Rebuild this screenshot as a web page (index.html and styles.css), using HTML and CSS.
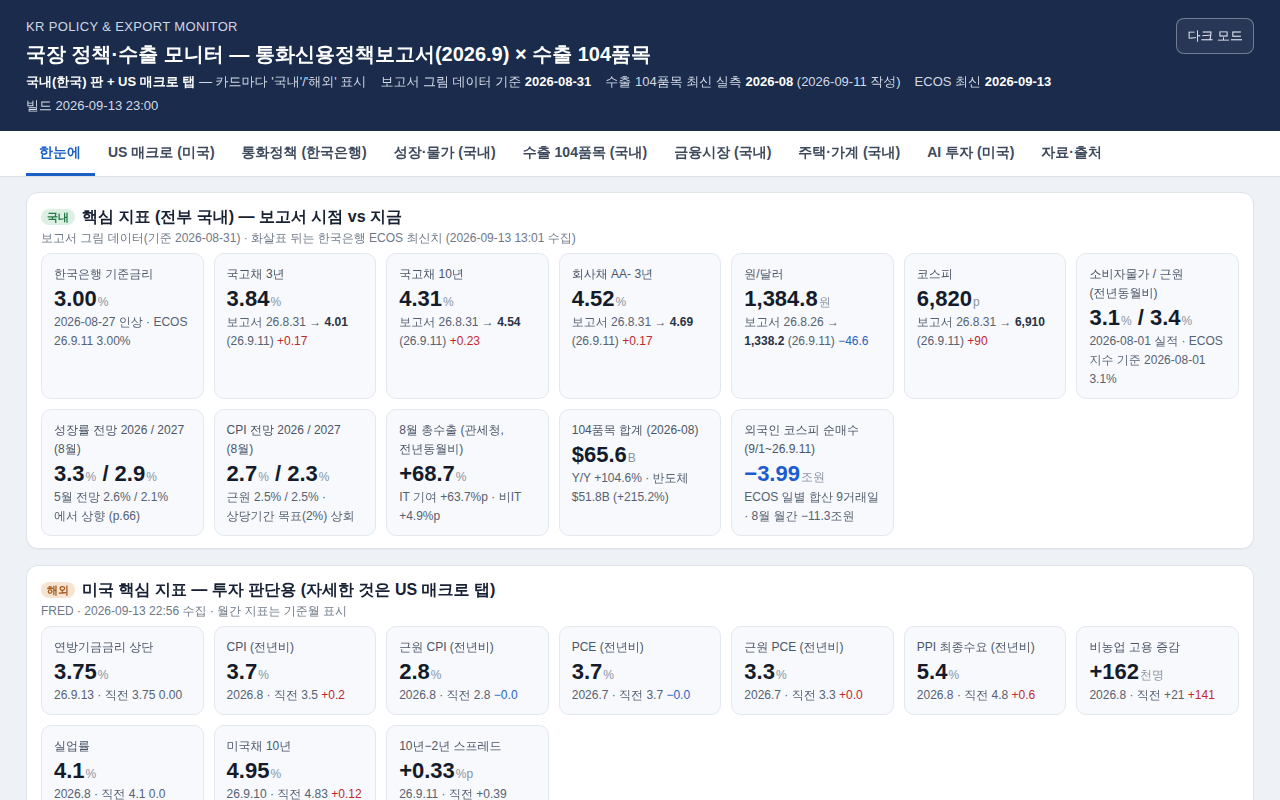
FILE: index.html
```html
<!DOCTYPE html>
<html lang="ko">
<head>
<meta charset="utf-8">
<title>국장 정책·수출 모니터</title>
<link rel="stylesheet" href="styles.css">
</head>
<body>
<header class="hdr">
  <div class="hdr-main">
    <div class="eyebrow">KR POLICY &amp; EXPORT MONITOR</div>
    <h1 class="title">국장 정책·수출 모니터 — 통화신용정책보고서(2026.9) × 수출 104품목</h1>
    <div class="meta">
      <span><b>국내(한국) 판 + US 매크로 탭</b> — 카드마다 '국내'/'해외' 표시</span>
      <span>보고서 그림 데이터 기준 <b>2026-08-31</b></span>
      <span>수출 104품목 최신 실측 <b>2026-08</b> (2026-09-11 작성)</span>
      <span>ECOS 최신 <b>2026-09-13</b></span>
    </div>
    <div class="meta">빌드 2026-09-13 23:00</div>
  </div>
  <button class="mode-btn">다크 모드</button>
</header>

<nav class="tabs">
  <a class="tab active">한눈에</a>
  <a class="tab">US 매크로 (미국)</a>
  <a class="tab">통화정책 (한국은행)</a>
  <a class="tab">성장·물가 (국내)</a>
  <a class="tab">수출 104품목 (국내)</a>
  <a class="tab">금융시장 (국내)</a>
  <a class="tab">주택·가계 (국내)</a>
  <a class="tab">AI 투자 (미국)</a>
  <a class="tab">자료·출처</a>
</nav>

<main class="main">
  <section class="panel">
    <div class="panel-head"><span class="badge kr">국내</span><h2>핵심 지표 (전부 국내) — 보고서 시점 vs 지금</h2></div>
    <div class="panel-sub">보고서 그림 데이터(기준 2026-08-31) · 화살표 뒤는 한국은행 ECOS 최신치 (2026-09-13 13:01 수집)</div>
    <div class="grid">
      <div class="card"><div class="lbl">한국은행 기준금리</div><div class="val">3.00<span class="u">%</span></div><div class="note">2026-08-27 인상 · ECOS 26.9.11 3.00%</div></div>
      <div class="card"><div class="lbl">국고채 3년</div><div class="val">3.84<span class="u">%</span></div><div class="note">보고서 26.8.31 → <b>4.01</b> (26.9.11) <span class="up">+0.17</span></div></div>
      <div class="card"><div class="lbl">국고채 10년</div><div class="val">4.31<span class="u">%</span></div><div class="note">보고서 26.8.31 → <b>4.54</b> (26.9.11) <span class="up">+0.23</span></div></div>
      <div class="card"><div class="lbl">회사채 AA- 3년</div><div class="val">4.52<span class="u">%</span></div><div class="note">보고서 26.8.31 → <b>4.69</b> (26.9.11) <span class="up">+0.17</span></div></div>
      <div class="card"><div class="lbl">원/달러</div><div class="val">1,384.8<span class="u">원</span></div><div class="note">보고서 26.8.26 → <b>1,338.2</b> (26.9.11) <span class="dn">−46.6</span></div></div>
      <div class="card"><div class="lbl">코스피</div><div class="val">6,820<span class="u">p</span></div><div class="note">보고서 26.8.31 → <b>6,910</b> (26.9.11) <span class="up">+90</span></div></div>
      <div class="card"><div class="lbl">소비자물가 / 근원 (전년동월비)</div><div class="val">3.1<span class="u">%</span> / 3.4<span class="u">%</span></div><div class="note">2026-08-01 실적 · ECOS 지수 기준 2026-08-01 3.1%</div></div>
      <div class="card"><div class="lbl">성장률 전망 2026 / 2027 (8월)</div><div class="val">3.3<span class="u">%</span> / 2.9<span class="u">%</span></div><div class="note">5월 전망 2.6% / 2.1% 에서 상향 (p.66)</div></div>
      <div class="card"><div class="lbl">CPI 전망 2026 / 2027 (8월)</div><div class="val">2.7<span class="u">%</span> / 2.3<span class="u">%</span></div><div class="note">근원 2.5% / 2.5% · 상당기간 목표(2%) 상회</div></div>
      <div class="card"><div class="lbl">8월 총수출 (관세청, 전년동월비)</div><div class="val">+68.7<span class="u">%</span></div><div class="note">IT 기여 +63.7%p · 비IT +4.9%p</div></div>
      <div class="card"><div class="lbl">104품목 합계 (2026-08)</div><div class="val">$65.6<span class="u">B</span></div><div class="note">Y/Y +104.6% · 반도체 $51.8B (+215.2%)</div></div>
      <div class="card"><div class="lbl">외국인 코스피 순매수 (9/1~26.9.11)</div><div class="val blue">−3.99<span class="u">조원</span></div><div class="note">ECOS 일별 합산 9거래일 · 8월 월간 −11.3조원</div></div>
    </div>
  </section>

  <section class="panel">
    <div class="panel-head"><span class="badge us">해외</span><h2>미국 핵심 지표 — 투자 판단용 (자세한 것은 US 매크로 탭)</h2></div>
    <div class="panel-sub">FRED · 2026-09-13 22:56 수집 · 월간 지표는 기준월 표시</div>
    <div class="grid">
      <div class="card"><div class="lbl">연방기금금리 상단</div><div class="val">3.75<span class="u">%</span></div><div class="note">26.9.13 · 직전 3.75 0.00</div></div>
      <div class="card"><div class="lbl">CPI (전년비)</div><div class="val">3.7<span class="u">%</span></div><div class="note">2026.8 · 직전 3.5 <span class="up">+0.2</span></div></div>
      <div class="card"><div class="lbl">근원 CPI (전년비)</div><div class="val">2.8<span class="u">%</span></div><div class="note">2026.8 · 직전 2.8 <span class="dn">−0.0</span></div></div>
      <div class="card"><div class="lbl">PCE (전년비)</div><div class="val">3.7<span class="u">%</span></div><div class="note">2026.7 · 직전 3.7 <span class="dn">−0.0</span></div></div>
      <div class="card"><div class="lbl">근원 PCE (전년비)</div><div class="val">3.3<span class="u">%</span></div><div class="note">2026.7 · 직전 3.3 <span class="up">+0.0</span></div></div>
      <div class="card"><div class="lbl">PPI 최종수요 (전년비)</div><div class="val">5.4<span class="u">%</span></div><div class="note">2026.8 · 직전 4.8 <span class="up">+0.6</span></div></div>
      <div class="card"><div class="lbl">비농업 고용 증감</div><div class="val">+162<span class="u">천명</span></div><div class="note">2026.8 · 직전 +21 <span class="up">+141</span></div></div>
      <div class="card"><div class="lbl">실업률</div><div class="val">4.1<span class="u">%</span></div><div class="note">2026.8 · 직전 4.1 0.0</div></div>
      <div class="card"><div class="lbl">미국채 10년</div><div class="val">4.95<span class="u">%</span></div><div class="note">26.9.10 · 직전 4.83 <span class="up">+0.12</span></div></div>
      <div class="card"><div class="lbl">10년−2년 스프레드</div><div class="val">+0.33<span class="u">%p</span></div><div class="note">26.9.11 · 직전 +0.39 <span class="dn">−0.06</span></div></div>
    </div>
  </section>
</main>
</body>
</html>
```

FILE: styles.css
```css
* { box-sizing: border-box; }
html, body { margin: 0; padding: 0; }
body {
  font-family: "Liberation Sans", "WenQuanYi Zen Hei", "Noto Sans CJK KR", sans-serif;
  background: #eef1f6;
  color: #1a2233;
  word-break: keep-all;
}

.hdr {
  background: #1a2b4b;
  color: #fff;
  padding: 18px 26px 13px;
  display: flex;
  justify-content: space-between;
  align-items: flex-start;
}
.eyebrow {
  font-size: 13px;
  line-height: 18px;
  letter-spacing: 0.35px;
  color: #cfd7e5;
}
.title {
  margin: 3px 0 0;
  font-size: 20px;
  line-height: 30px;
  font-weight: 900;
  color: #ffffff;
}
.meta {
  margin-top: 1px;
  font-size: 13px;
  line-height: 24px;
  color: #d3dae7;
  display: flex;
  gap: 14px;
}
.meta + .meta { margin-top: 0; }
.meta b { color: #ffffff; font-weight: 900; }
.mode-btn {
  font-family: inherit;
  font-size: 13px;
  color: #e6ebf3;
  background: rgba(255,255,255,0.06);
  border: 1px solid rgba(255,255,255,0.35);
  border-radius: 8px;
  height: 36px;
  padding: 0 10px;
}

.tabs {
  background: #ffffff;
  border-bottom: 1px solid #dce2ea;
  display: flex;
  padding: 0 26px;
  height: 46px;
}
.tab {
  display: flex;
  align-items: center;
  padding: 1px 14px 0 13px;
  font-size: 14px;
  font-weight: 900;
  color: #3e4a5c;
  border-bottom: 3px solid transparent;
}
.tab.active { color: #1b5fc7; border-bottom-color: #1b5fc7; }

.main {
  padding: 15px 26px;
  display: flex;
  flex-direction: column;
  gap: 16px;
}
.panel {
  background: #ffffff;
  border: 1px solid #dfe4eb;
  border-radius: 12px;
  padding: 13px 14px 12px;
  box-shadow: 0 1px 2px rgba(20,30,50,0.04);
}
.panel-head {
  display: flex;
  align-items: center;
  gap: 7px;
  height: 22px;
}
.panel-head h2 {
  margin: 0;
  font-size: 16px;
  line-height: 22px;
  font-weight: 900;
  color: #182133;
}
.badge {
  font-size: 11px;
  line-height: 16px;
  padding: 0 6px;
  border-radius: 8px;
  font-weight: 900;
}
.badge.kr { background: #dcf1e3; color: #237a47; }
.badge.us { background: #f7e4d0; color: #a4561c; }
.panel-sub {
  margin-top: 1px;
  font-size: 12px;
  line-height: 18px;
  color: #6e7888;
}
.grid {
  margin-top: 6px;
  display: grid;
  grid-template-columns: repeat(7, 1fr);
  gap: 10px;
}
.card {
  background: #f7f9fc;
  border: 1px solid #e3e8ef;
  border-radius: 10px;
  padding: 11px 12px 9px;
}
.lbl {
  font-size: 12px;
  line-height: 19px;
  color: #4b5566;
}
.val {
  font-size: 22px;
  line-height: 29px;
  height: 29px;
  font-weight: 900;
  color: #141b2a;
}
.val.blue { color: #1c5bd0; }
.u {
  font-size: 12px;
  line-height: 1;
  font-weight: 400;
  color: #8a94a3;
  margin-left: 1px;
}
.note {
  font-size: 12px;
  line-height: 19px;
  color: #566172;
}
.note b { color: #2a3345; font-weight: 900; }
.up { color: #c0282d; }
.dn { color: #1f62c0; }
```
